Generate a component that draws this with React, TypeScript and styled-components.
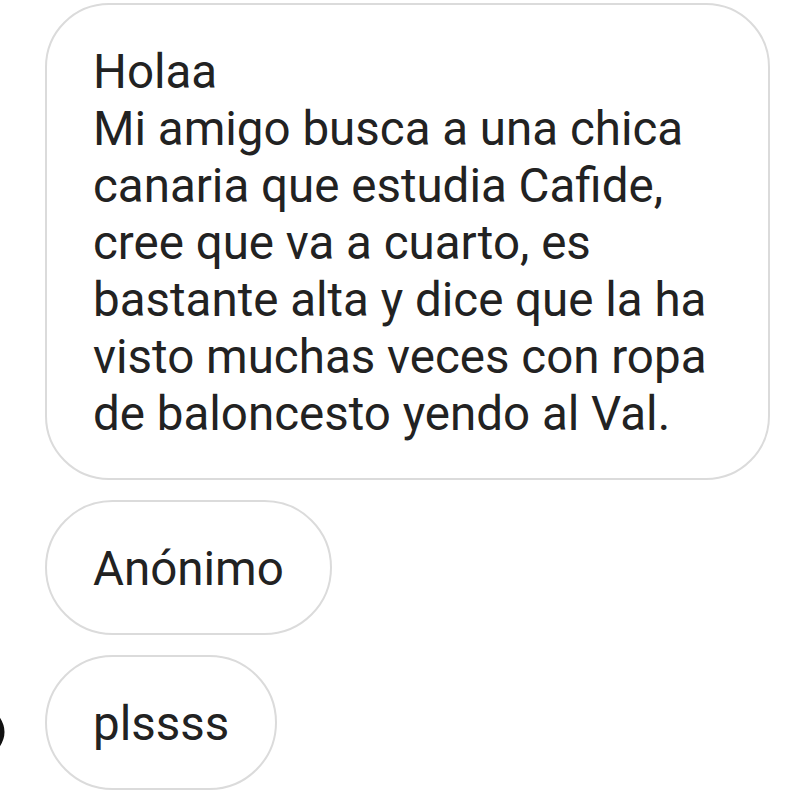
import React from "react";
import styled, { createGlobalStyle } from "styled-components";

const Global = createGlobalStyle`
  html, body { margin: 0; padding: 0; background: #ffffff; }
  body { font-family: Roboto, "Noto Sans", "Liberation Sans", sans-serif; }
`;

const Thread = styled.div`
  display: flex;
  flex-direction: column;
  gap: 20px;
  padding-top: 3px;
`;

const Row = styled.div`
  display: flex;
  align-items: center;
`;

const Gutter = styled.div`
  width: 45px;
  flex: 0 0 45px;
  display: flex;
  align-items: center;
`;

const Bubble = styled.div<{ $wide?: boolean }>`
  box-sizing: border-box;
  border: 2px solid #dbdbdb;
  border-radius: ${(p) => (p.$wide ? "64px" : "999px")};
  width: ${(p) => (p.$wide ? "725px" : "auto")};
  padding: 39px 46px 35px 46px;
  font-size: 47.5px;
  line-height: 57px;
  color: #222222;
  white-space: pre-line;
  background: #ffffff;
`;

const message = `Holaa
Mi amigo busca a una chica
canaria que estudia Cafide,
cree que va a cuarto, es
bastante alta y dice que la ha
visto muchas veces con ropa
de baloncesto yendo al Val.`;

export default function App() {
  return (
    <>
      <Global />
      <Thread>
        <Row>
          <Gutter />
          <Bubble $wide>{message}</Bubble>
        </Row>
        <Row>
          <Gutter />
          <Bubble>Anónimo</Bubble>
        </Row>
        <Row>
          <Gutter>
            <svg width="45" height="70" viewBox="0 0 45 70">
              <path d="M -8 24 Q 12 44 -8 64" stroke="#111" strokeWidth="5" fill="none" />
            </svg>
          </Gutter>
          <Bubble>plssss</Bubble>
        </Row>
      </Thread>
    </>
  );
}
